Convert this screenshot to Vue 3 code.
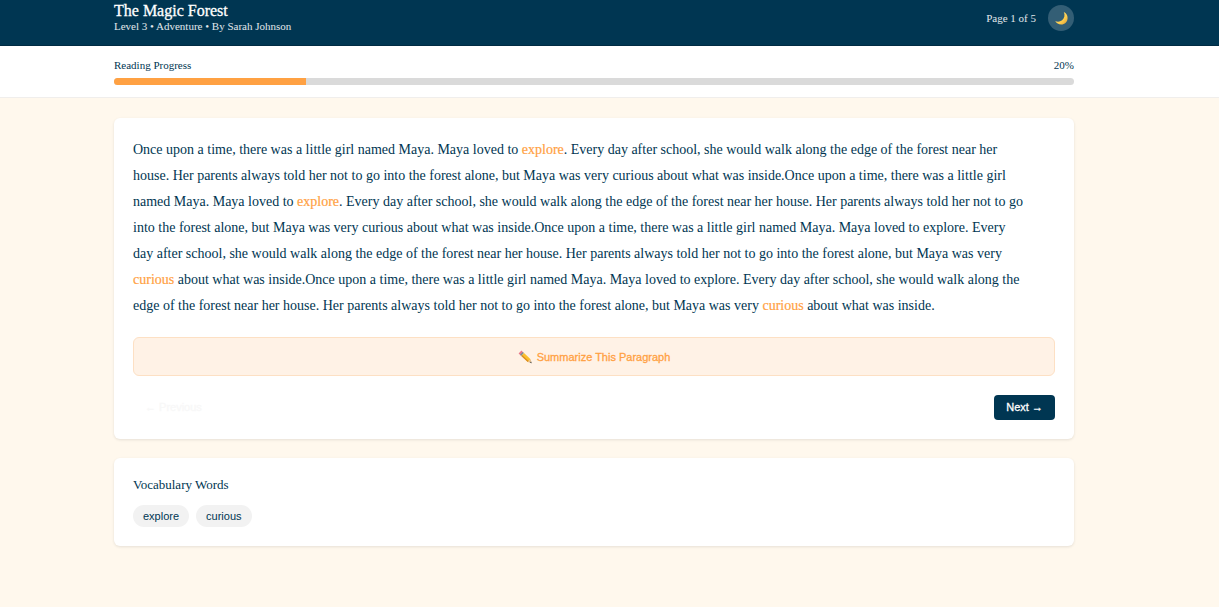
<script setup>
import { ref } from 'vue'

const current = ref(1)
const total = 5
const progress = 20
const words = ['explore', 'curious']

const start = 'Once upon a time, there was a little girl named Maya. Maya loved to '
const middle =
  '. Every day after school, she would walk along the edge of the forest near her house. Her parents always told her not to go into the forest alone, but Maya was very '
const end = ' about what was inside.'

const story = [
  { text: start },
  { text: 'explore', word: true },
  { text: middle + 'curious' + end + start },
  { text: 'explore', word: true },
  { text: middle + 'curious' + end + start + 'explore' + middle },
  { text: 'curious', word: true },
  { text: end + start + 'explore' + middle },
  { text: 'curious', word: true },
  { text: end }
]
</script>

<template>
  <div class="page">
    <header class="header">
      <div class="container header-row">
        <div>
          <h1 class="title">The Magic Forest</h1>
          <p class="meta">Level 3 • Adventure • By Sarah Johnson</p>
        </div>
        <div class="header-tools">
          <span class="page-count">Page {{ current }} of {{ total }}</span>
          <button class="theme" type="button" aria-label="Toggle dark mode">
            <svg viewBox="0 0 14 14" width="14" height="14" aria-hidden="true">
              <defs>
                <linearGradient id="moon" x1="0" y1="0" x2="1" y2="1">
                  <stop offset="0" stop-color="#ffe37a" />
                  <stop offset="0.65" stop-color="#fdcb4b" />
                  <stop offset="1" stop-color="#d99a35" />
                </linearGradient>
              </defs>
              <path d="M9.8 1C12.400 2.200 13.600 4.400 13.600 6.900C13.600 10.700 10.800 13.500 7.200 13.500C4.600 13.500 2.400 12.300 1.200 10C2.900 10.900 5.900 11 8.100 9.300C10.500 7.400 11.200 3.800 9.800 1Z" fill="url(#moon)" />
            </svg>
          </button>
        </div>
      </div>
    </header>

    <section class="progress">
      <div class="container">
        <div class="progress-labels">
          <span id="progress-label">Reading Progress</span>
          <span>{{ progress }}%</span>
        </div>
        <div class="track" role="progressbar" aria-labelledby="progress-label" :aria-valuenow="progress">
          <div class="fill" :style="{ width: progress + '%' }"></div>
        </div>
      </div>
    </section>

    <main class="container main">
      <article class="card">
        <p class="story"><template v-for="(part, i) in story" :key="i"><span v-if="part.word" class="highlight">{{ part.text }}</span><template v-else>{{ part.text }}</template></template></p>
        <button class="summarize" type="button">
          <svg viewBox="0 0 14 14" width="14" height="14" aria-hidden="true">
            <path d="M.6 3.400L3.400 .6L5.400 2.500L2.700 5.400Z" fill="#e8798a" />
            <path d="M2.100 4.700L4.800 1.900L6 3.100L3.300 6Z" fill="#78909c" />
            <path d="M3.300 6L6 3.100L12.600 9.300L9.800 12.100Z" fill="#fbc02d" />
            <path d="M3.300 6L4.200 5L10.800 11.200L9.800 12.100Z" fill="#d98b24" />
            <path d="M12.600 9.300L13.600 13.200L9.800 12.100Z" fill="#e5bd8b" />
            <path d="M13.100 11.600L13.700 13.300L12 12.800Z" fill="#37474f" />
          </svg>
          <span>Summarize This Paragraph</span>
        </button>
        <nav class="nav" aria-label="Pages">
          <button class="nav-button" type="button" disabled>← Previous</button>
          <button class="nav-button next" type="button">Next →</button>
        </nav>
      </article>

      <section class="card">
        <h2 class="vocab-title">Vocabulary Words</h2>
        <div class="chips">
          <button v-for="word in words" :key="word" class="chip" type="button">{{ word }}</button>
        </div>
      </section>
    </main>
  </div>
</template>

<style>
body {
  margin: 0;
  background: #fff8ed;
}
</style>

<style scoped>
.page {
  min-height: 100vh;
  background: #fff8ed;
  color: #003652;
  font-family: "Liberation Serif", "Times New Roman", serif;
}

.container {
  max-width: 960px;
  margin: 0 auto;
}

.header,
.progress,
.main {
  box-sizing: border-box;
}

.header {
  padding: 3px 31px 12px 0;
  background: #003652;
  border-bottom: 1px solid #002b43;
  color: #fff;
}

.header-row,
.header-tools,
.progress-labels,
.nav {
  display: flex;
  align-items: center;
  justify-content: space-between;
}

.header-row {
  align-items: flex-start;
}

.title {
  margin: 0;
  font-size: 16px;
  font-weight: 400;
  line-height: 16px;
  -webkit-text-stroke: 0.3px currentColor;
}

.meta {
  margin: 0;
  font-size: 11px;
  line-height: 14px;
  color: #e0e7eb;
}

.header-tools {
  gap: 12px;
  height: 30px;
}

.page-count {
  font-size: 11px;
  line-height: 14px;
  color: #e0e7eb;
}

button {
  margin: 0;
  border: 0;
  font-family: "Liberation Sans", Arial, sans-serif;
  font-size: 11px;
  line-height: 14px;
}

.theme {
  display: flex;
  align-items: center;
  justify-content: center;
  width: 26px;
  height: 26px;
  padding: 0;
  border-radius: 50%;
  background: #335e75;
}

.progress {
  padding: 12px 31px 12px 0;
  background: #fff;
  border-bottom: 1px solid #f0eeec;
}

.progress-labels {
  font-size: 11px;
  line-height: 14px;
  margin-bottom: 6px;
}

.track {
  height: 7px;
  border-radius: 4px;
  background: #dadada;
  overflow: hidden;
}

.fill {
  height: 100%;
  background: #ffa143;
}

.main {
  display: grid;
  gap: 19px;
  max-width: 991px;
  padding: 20px 31px 20px 0;
}

.card {
  padding: 19px;
  border-radius: 6px;
  background: #fff;
  box-shadow: 0 1px 3px rgba(0, 0, 0, 0.1);
}

.story {
  max-width: 896px;
  margin: 0 0 18px;
  font-size: 14px;
  line-height: 26px;
}

.highlight {
  color: #ffa143;
  -webkit-text-stroke: 0.2px currentColor;
}

.summarize {
  display: flex;
  align-items: center;
  justify-content: center;
  gap: 5px;
  width: 100%;
  height: 39px;
  border: 1px solid #fde0c4;
  border-radius: 6px;
  background: #fff2e6;
  color: #ffa143;
  -webkit-text-stroke: 0.3px currentColor;
}

.nav {
  margin-top: 19px;
}

.nav-button {
  height: 25px;
  padding: 0 12px 2px;
  border-radius: 4px;
  background: transparent;
  color: #f8f8f8;
  -webkit-text-stroke: 0.3px currentColor;
}

.next {
  background: #003652;
  color: #fff;
}

.vocab-title {
  margin: 0 0 12px;
  font-size: 13px;
  font-weight: 400;
  line-height: 16px;
}

.chips {
  display: flex;
  gap: 7px;
}

.chip {
  height: 22px;
  padding: 0 10px;
  border-radius: 11px;
  background: #f2f2f2;
  color: #003652;
}
</style>
